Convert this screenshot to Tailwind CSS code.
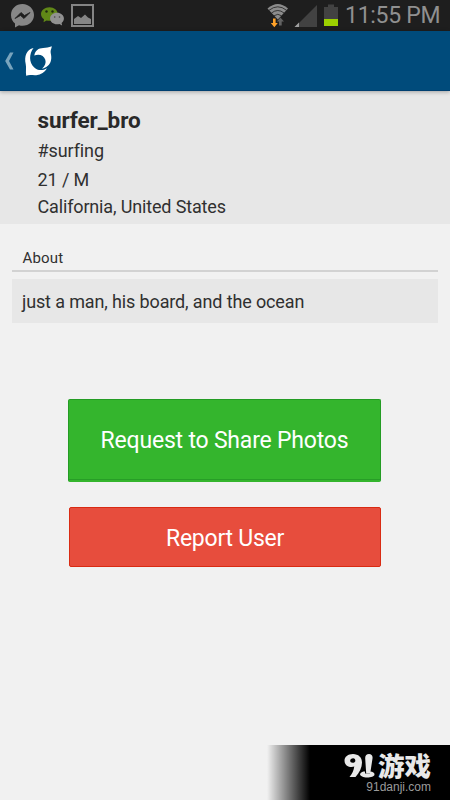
<!DOCTYPE html>
<html lang="en">
<head>
<meta charset="utf-8">
<title>surfer_bro</title>
<script src="https://cdn.jsdelivr.net/npm/@tailwindcss/browser@4"></script>
</head>
<body class="w-[450px] h-[800px] overflow-hidden bg-[#f1f1f1] font-[Roboto,sans-serif] text-[#303030] flex flex-col">
<div class="h-[31px] shrink-0 bg-[#1e1e1e] flex items-start justify-between">
  <svg class="w-[110px] h-[31px]" viewBox="0 0 110 31">
    <path d="M22.5 4C16 4 11 8.700 11 15c0 3.800 1.700 6.700 4 8.500v4l4-2.200c1.200.4 2.300.5 3.500.5C29 25.800 34 21 34 15S29 4 22.500 4z" fill="#878787"/>
    <path d="M15 18.500l6-6 3.500 3 5.500-3-6 6-3.500-3z" fill="#1e1e1e" stroke="#1e1e1e" stroke-width=".8"/>
    <path d="M49.500 7.200c-4.700 0-8.500 3-8.500 6.800 0 2.200 1.200 4 3 5.200l-.5 3 3-1.800c1 .3 2 .4 3 .4 4.700 0 8.300-3 8.300-6.800s-3.700-6.800-8.300-6.800z" fill="#608717"/>
    <circle cx="46.500" cy="11.500" r="1.200" fill="#1e2810"/><circle cx="52.500" cy="11.500" r="1.200" fill="#1e2810"/>
    <path d="M57 12.700c-3.900 0-6.900 2.500-6.900 5.800s3 5.800 6.900 5.800c.8 0 1.600-.1 2.400-.3l2.700 1.500-.5-2.500c1.500-1.100 2.300-2.700 2.300-4.500 0-3.300-3-5.800-6.900-5.800z" fill="#919191"/>
    <circle cx="54.700" cy="17" r=".8" fill="#444"/><circle cx="59.500" cy="17" r=".8" fill="#444"/>
    <rect x="72" y="5" width="21" height="21" fill="none" stroke="#858585" stroke-width="2"/>
    <path d="M74 24v-5l4-3 3 2 4-3.500 3 3 3 1.500v5z" fill="#858585"/>
  </svg>
  <div class="flex">
    <svg class="w-[80px] h-[31px]" viewBox="265 0 80 31">
      <path d="M267.500 8.500Q277.800 -.5 288 8.500L277.800 19.500z" fill="#8c8c8c"/>
      <g fill="none" stroke="#1e1e1e" stroke-width=".8">
        <path d="M269 10.300q8.800-7 17.600 0M271.500 13q6.300-5 12.600 0M274 15.800q3.800-3 7.600 0"/>
      </g>
      <path d="M273 18.500h2.600v4.500h2.200l-3.500 4.200-3.500-4.200h2.200z" fill="#ffa229"/>
      <path d="M279 25.500v-4h-2.200l3.600-4 3.600 4h-2.300v4z" fill="#626262"/>
      <path d="M317 5v22h-22z" fill="#424242"/><path d="M299 22.500v4.500h-4.500z" fill="#a0a0a0"/>
      <path d="M328 4.500h6v2.500h4v12h-14V7h4z" fill="#424242"/>
      <rect x="324" y="19" width="14" height="7" fill="#9bd000"/>
    </svg>
    <div class="w-[105px] text-[23px] leading-[31px] text-[#909090] whitespace-nowrap tracking-[-0.3px]">11:55 PM</div>
  </div>
</div>
<header class="h-[60px] shrink-0 bg-[#004b7b] relative z-10 border-b border-[#003f70] shadow-[0_1px_4px_rgba(0,0,0,0.3)]">
  <svg class="w-[60px] h-[60px]" viewBox="0 31 60 60">
    <path d="M10 52.500h3.500l-4.500 8.500 4.500 8.500H10l-4.800-8.500z" fill="#78a4bd"/>
    <path d="M33.500 48C26.500 49.500 24 56.500 25.700 64c.8 3.500-.2 7.500.5 11.800 3.200-1.500 6.400-.3 10-.6 5-.5 8.500-3 10.800-7-4.500 2.800-9.500 2.500-13-1-5.200-5-5-13.200-.5-19.200z" fill="#fff"/>
    <path d="M34.300 55.500c.8-4.800 4.200-7.500 8.900-7.500 3.200 0 5.300-.5 8.600-1.700-.2 2.500-1.600 4-1.100 6.700.6 2.800.9 5 .2 7.800-1 4-4.100 6.800-8.900 8 3.200-3 4.200-6 3.300-9-1.200-4.500-6.300-6.300-11-4.300z" fill="#fff"/>
  </svg>
</header>
<section class="h-[133px] shrink-0 bg-[#e7e7e7] pl-[37.500px] pt-[15px] whitespace-nowrap">
  <h1 class="text-[22.500px] leading-[29px] font-bold tracking-[-0.1px] text-[#292929]">surfer_bro</h1>
  <p class="text-[18px] leading-[31px] tracking-[-0.100px]">#surfing</p>
  <p class="text-[18px] leading-[27px] tracking-[-0.100px]">21 / M</p>
  <p class="text-[18px] leading-[28px] tracking-[-0.150px]">California, United States</p>
</section>
<main class="px-[12px] pt-[22px] flex flex-col">
  <h2 class="h-[26px] border-b-2 border-[#d2d2d2] pl-[10.500px] text-[15px] leading-[24px] tracking-[0.200px]">About</h2>
  <p class="mt-[7px] h-[44px] bg-[#e7e7e7] pl-[10px] text-[18px] leading-[45px] tracking-[-0.135px] whitespace-nowrap">just a man, his board, and the ocean</p>
  <button class="mt-[76px] ml-[56px] w-[313px] h-[83px] rounded-[2px] bg-[#34b52d] border border-[#249c24] border-b-[#34b52d] text-white text-[23px] tracking-[-0.2px] whitespace-nowrap flex flex-col"><span class="block w-full h-[80px] leading-[82px] border-b border-[#279d27]">Request to Share Photos</span></button>
  <button class="mt-[25px] ml-[57px] w-[312px] h-[60px] rounded-[2px] bg-[#e74d3d] border border-[#d92b13] text-white text-[23px] tracking-[-0.25px] leading-[61px] whitespace-nowrap flex justify-center">Report User</button>
</main>
<footer class="mt-auto ml-[267px] h-[55px] shrink-0 bg-linear-to-r from-transparent to-black to-[43px] flex flex-col items-end pr-[19px] pt-[7px]">
  <div class="flex h-[28px]">
    <svg class="w-[31px] h-[28px]" viewBox="345 752 31 28">
      <path d="M354 754c-5 0-8.500 2.800-8.500 6.700 0 3.800 3 6.300 7 6.300 1.200 0 2-.2 2.800-.5-.6 4-2 7-4.800 10.500h6c4-4.500 6.500-9.500 6.500-14.500 0-5-3.500-8.500-9-8.500zm.2 4.200c1.700 0 2.300 1.200 2.100 3.100-.6 1-1.500 1.500-2.500 1.500-1.800 0-2.600-.8-2.600-2.200 0-1.500 1.200-2.400 3-2.400z" fill="#e8e8e8" fill-rule="evenodd"/>
      <path d="M370 754c-2.500 0-4 1.500-3.800 4.500l1 15h4l2.300-15c.4-2.700-1-4.500-3.500-4.500z" fill="#e8e8e8"/>
      <path d="M361 774c1-2 3-2.500 5-2.500v2h5v-2c3 .2 4.500 1.300 4.500 3 0 1.800-3.500 3-7.500 3-3.500 0-7-1.500-7-3.500z" fill="#e8e8e8"/>
    </svg>
    <div class="ml-[3px] w-[53px] text-[26.500px] leading-[26px] font-black text-[#e8e8e8] font-['Noto_Sans_CJK_SC',sans-serif] whitespace-nowrap">游戏</div>
  </div>
  <div class="font-['Liberation_Sans',sans-serif] text-[12px] leading-[14px] text-[#9b9b9b]">91danji.com</div>
</footer>
</body>
</html>
